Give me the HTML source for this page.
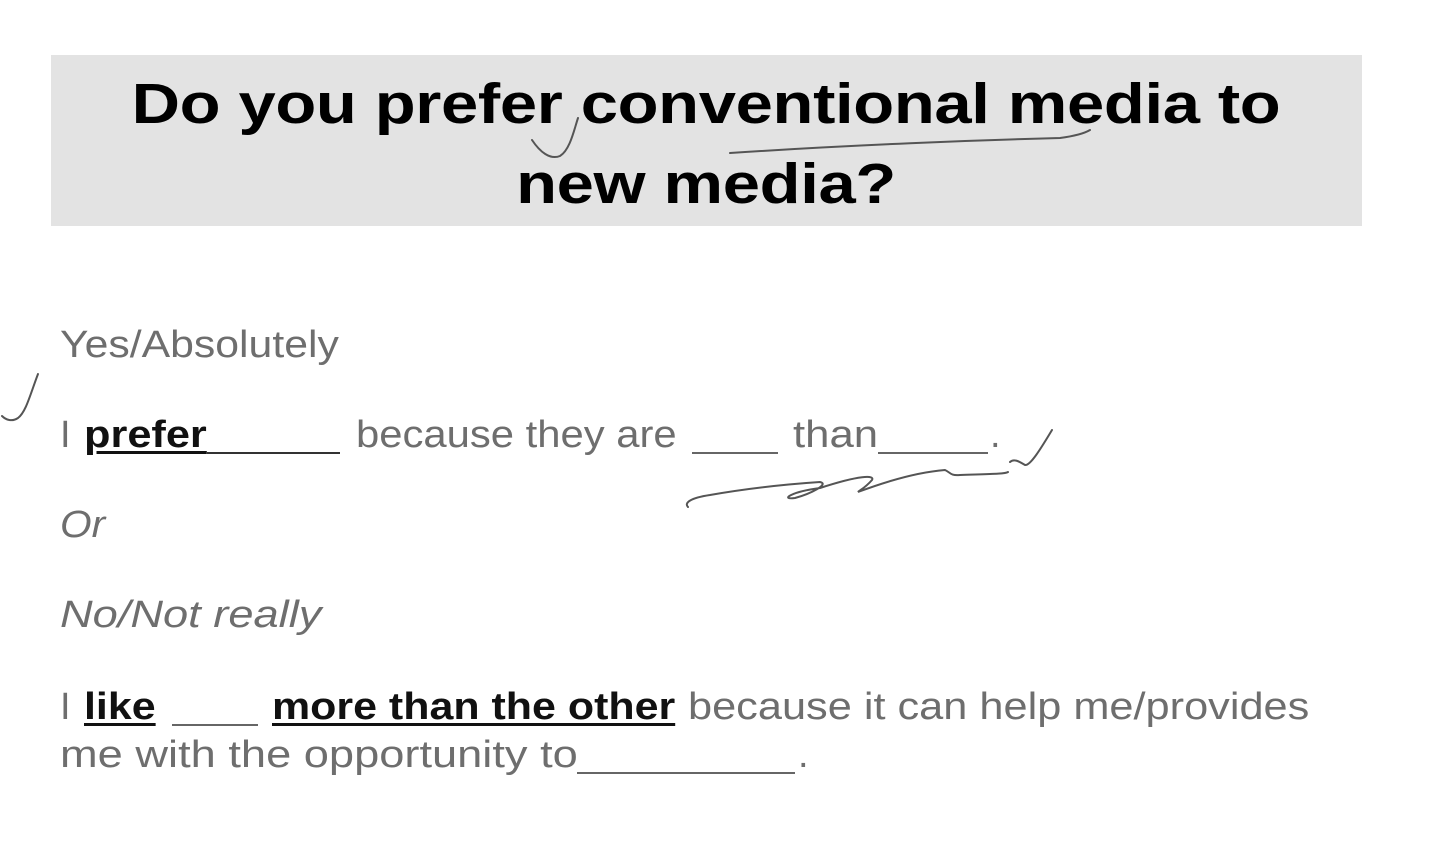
<!DOCTYPE html>
<html><head><meta charset="utf-8"><style>
html,body{margin:0;padding:0;background:#fff;width:1438px;height:868px;overflow:hidden;position:relative}
.box{position:absolute;left:51px;top:55px;width:1311px;height:171px;background:#e3e3e3}
.t{position:absolute;left:-13px;width:1438px;text-align:center;font:bold 57px/80px "Liberation Sans",Arial,sans-serif;color:#000;white-space:nowrap;letter-spacing:-0.3px;transform:scaleX(1.175);transform-origin:719px 0}
.s{position:absolute;font:38px/46px "Liberation Sans",sans-serif;color:#6e6e6e;white-space:nowrap;transform-origin:0 0}
.b{color:#111;font-weight:bold;text-decoration:underline;text-decoration-thickness:3px;text-underline-offset:4px}
i{font-style:italic}
.u{position:absolute;height:0;border-bottom:2px solid #666}
</style></head><body>
<div class="box"></div>
<div class="t" style="top:64px">Do you prefer conventional media to</div>
<div class="t" style="top:144px">new media?</div>

<div class="s" style="left:60px;top:322px;transform:scaleX(1.125)">Yes/Absolutely</div>

<div class="s" style="left:60px;top:412px">I</div>
<div class="s b" style="left:84px;top:412px;transform:scaleX(1.14)">prefer</div>
<div class="u" style="left:207px;width:133px;top:452px;border-color:#333"></div>
<div class="s" style="left:356px;top:412px;transform:scaleX(1.10)">because they are</div>
<div class="u" style="left:692px;width:86px;top:452px"></div>
<div class="s" style="left:793px;top:412px;transform:scaleX(1.15)">than</div>
<div class="u" style="left:878px;width:110px;top:452px"></div>
<div class="s" style="left:990px;top:412px">.</div>

<div class="s" style="left:60px;top:502px;transform:scaleX(1.07)"><i>Or</i></div>
<div class="s" style="left:60px;top:592px;transform:scaleX(1.19)"><i>No/Not really</i></div>

<div class="s" style="left:60px;top:684px">I</div>
<div class="s b" style="left:84px;top:684px;transform:scaleX(1.13)">like</div>
<div class="u" style="left:172px;width:86px;top:724px"></div>
<div class="s b" style="left:272px;top:684px;transform:scaleX(1.13)">more than the other</div>
<div class="s" style="left:688px;top:684px;transform:scaleX(1.14)">because it can help me/provides</div>

<div class="s" style="left:60px;top:732px;transform:scaleX(1.19)">me with the opportunity to</div>
<div class="u" style="left:577px;width:218px;top:772px"></div>
<div class="s" style="left:798px;top:732px">.</div>

<svg width="1438" height="868" style="position:absolute;left:0;top:0" fill="none" stroke="#555" stroke-width="2" stroke-linecap="round">
<path d="M38 374 C30 395 26 412 18 418 C12 422 6 420 2 416"/>
<path d="M578 118 C574 130 570 150 560 156 C550 160 540 152 532 140"/>
<path d="M730 153 C850 145 980 140 1060 138 C1075 136 1085 133 1090 130"/>
<path d="M688 507 C684 503 690 498 710 495 C750 488 790 484 820 482 C830 484 810 494 795 498 C780 500 790 492 820 488 C860 475 875 475 872 480 C865 488 860 490 858 492 C890 480 920 472 945 470 C950 472 950 476 960 475 C990 474 1005 474 1008 472"/>
<path d="M1010 462 C1014 458 1020 462 1025 465 C1030 466 1040 450 1052 430"/>
</svg>
</body></html>
